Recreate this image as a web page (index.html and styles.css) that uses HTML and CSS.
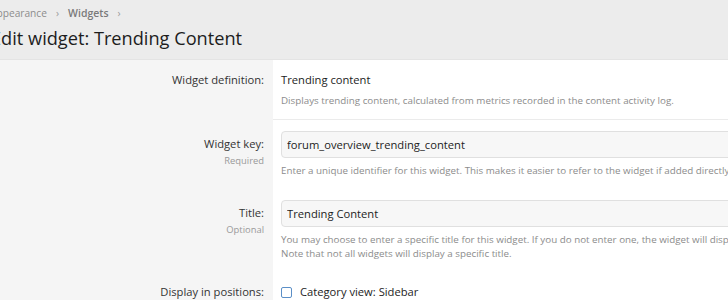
FILE: index.html
```html
<!DOCTYPE html>
<html lang="en">
<head>
  <meta charset="UTF-8" />
  <title>Edit widget: Trending Content</title>
  <link rel="stylesheet" href="styles.css">
</head>
<body>
  <div class="page">
    <div class="p-header">
      <ul class="crumbs">
        <li><a href="#">Appearance</a></li>
        <li class="sep">&rsaquo;</li>
        <li><a href="#" class="current">Widgets</a></li>
        <li class="sep">&rsaquo;</li>
      </ul>
      <h1>Edit widget: Trending Content</h1>
    </div>

    <div class="block">
      <dl class="form-row separated">
        <dt><div class="label">Widget definition:</div></dt>
        <dd>
          <div class="value">Trending content</div>
          <div class="explain">Displays trending content, calculated from metrics recorded in the content activity log.</div>
        </dd>
      </dl>

      <dl class="form-row input-row">
        <dt>
          <div class="label">Widget key:</div>
          <div class="hint">Required</div>
        </dt>
        <dd>
          <input class="input" type="text" value="forum_overview_trending_content">
          <div class="explain">Enter a unique identifier for this widget. This makes it easier to refer to the widget if added directly to a template.</div>
        </dd>
      </dl>

      <dl class="form-row input-row">
        <dt>
          <div class="label">Title:</div>
          <div class="hint">Optional</div>
        </dt>
        <dd>
          <input class="input" type="text" value="Trending Content">
          <div class="explain">You may choose to enter a specific title for this widget. If you do not enter one, the widget will display its default title.<br>Note that not all widgets will display a specific title.</div>
        </dd>
      </dl>

      <dl class="form-row">
        <dt><div class="label">Display in positions:</div></dt>
        <dd>
          <label class="check"><span class="box"></span>Category view: Sidebar</label>
        </dd>
      </dl>
    </div>
  </div>
</body>
</html>
```

FILE: styles.css
```css
* {
  margin: 0;
  padding: 0;
  box-sizing: border-box;
}
body {
  background: #ececec;
  color: #1d1d1d;
  font-family: 'Open Sans', 'Noto Sans', sans-serif;
  font-size: 11.2px;
  overflow: hidden;
}
.page {
  width: 1000px;
  margin-left: -9px;
}
.p-header {
  padding: 6px 0 0 0;
  height: 59px;
}
.crumbs {
  list-style: none;
  display: flex;
  gap: 9px;
  margin-left: -1px;
  font-size: 10.2px;
  line-height: 14px;
  color: #8c8c8c;
}
.crumbs a {
  color: #8c8c8c;
  text-decoration: none;
}
.crumbs a.current {
  font-weight: 600;
  font-size: 10.5px;
  color: #7a7a7a;
}
.crumbs .sep {
  color: #9a9a9a;
}
h1 {
  font-size: 18.2px;
  font-weight: 400;
  line-height: 26px;
  margin-top: 5px;
  color: #1d1d1d;
}
.block {
  background: #fff;
  border-top: 1px solid #e4e4e4;
}
.form-row {
  display: flex;
}
.form-row dt {
  width: 282px;
  flex-shrink: 0;
  background: #f5f5f5;
  text-align: right;
  padding: 11px 9px 11px 0;
}
.form-row dd {
  flex: 1;
  padding: 11px 8px 11px 8px;
}
.form-row.separated dd {
  border-bottom: 1px solid #ebebeb;
}
.label {
  line-height: 18px;
  color: #333;
}
.input-row .label {
  padding-top: 5px;
  line-height: 16px;
}
.hint {
  font-size: 9.4px;
  line-height: 13px;
  margin-top: 2px;
  color: #9a9a9a;
}
.value {
  line-height: 18px;
  color: #1d1d1d;
}
.explain {
  font-size: 9.8px;
  line-height: 14px;
  color: #8c8c8c;
  margin-top: 5px;
}
.input {
  display: block;
  width: 100%;
  height: 27px;
  padding: 0 5px;
  font: inherit;
  color: #1d1d1d;
  background: #f7f7f7;
  border: 1px solid #e0e0e0;
  border-radius: 4px;
  outline: none;
}
.input-row .explain {
  margin-top: 6px;
}
.check {
  display: flex;
  align-items: center;
  gap: 8px;
  line-height: 18px;
  color: #1d1d1d;
}
.check .box {
  width: 11px;
  height: 11px;
  border: 1px solid #5b8fc7;
  border-radius: 2px;
  background: #fff;
}
```
